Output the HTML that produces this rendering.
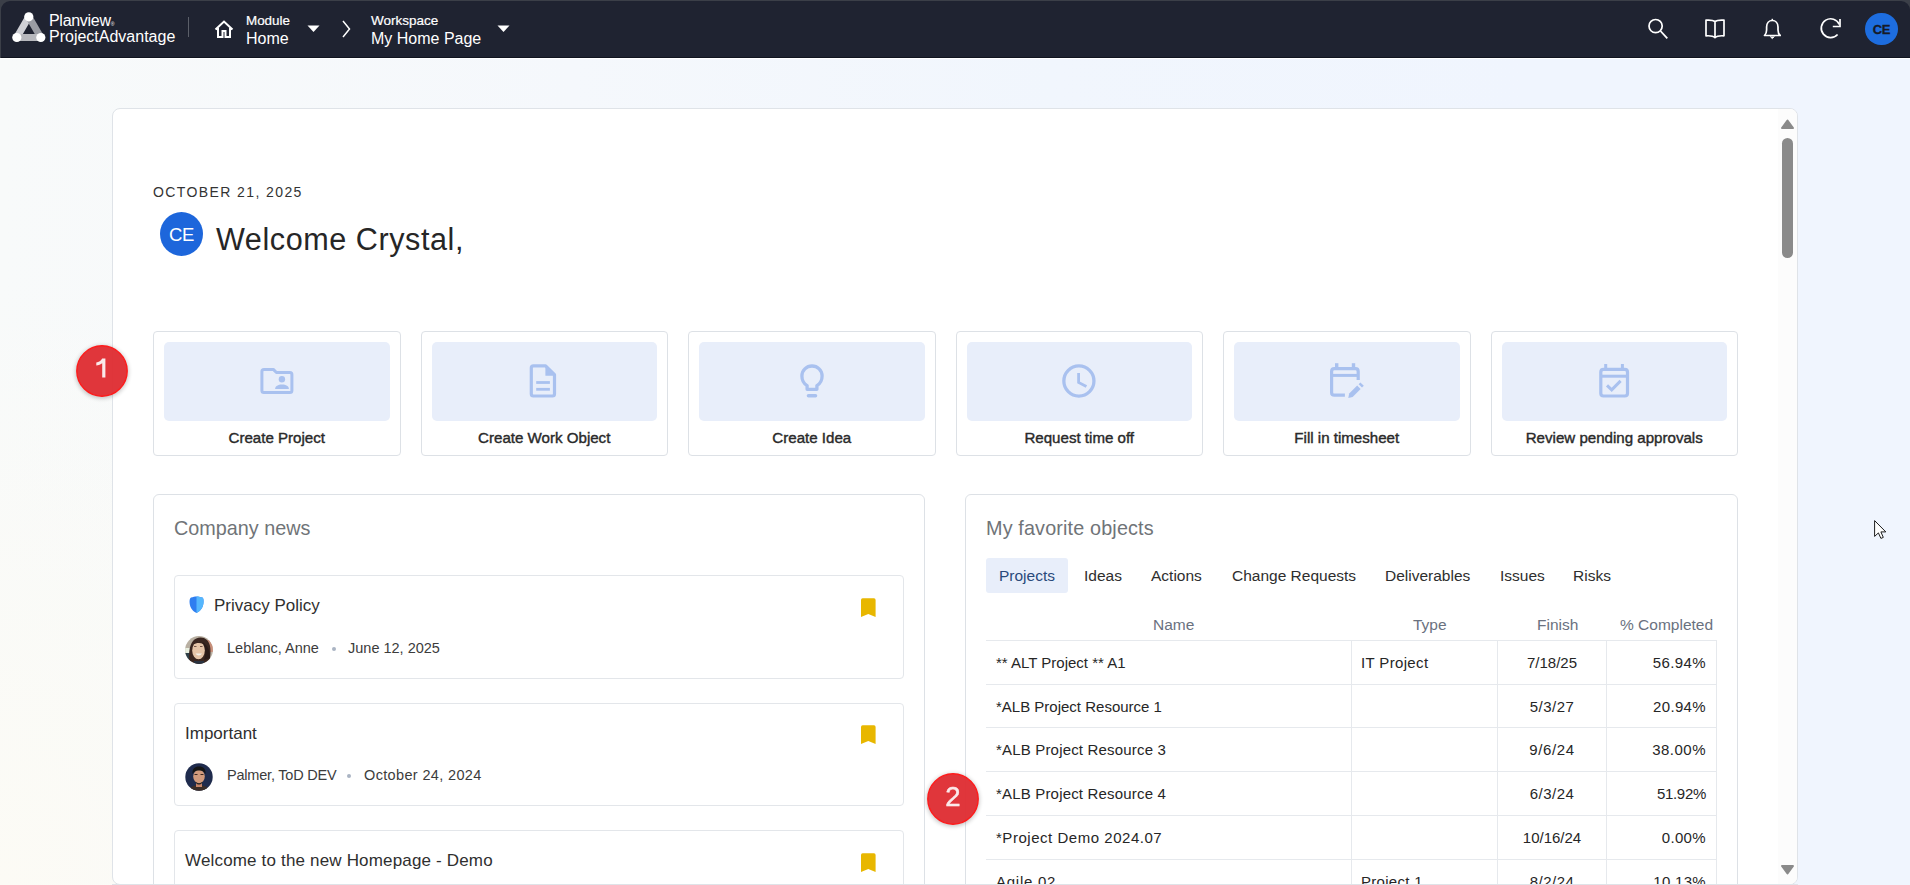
<!DOCTYPE html>
<html><head><meta charset="utf-8">
<style>
*{box-sizing:border-box;margin:0;padding:0}
html,body{width:1910px;height:885px;overflow:hidden}
body{font-family:"Liberation Sans",sans-serif;background:#f5f7fb;position:relative;color:#222}
.a{position:absolute}
.t{position:absolute;white-space:nowrap;line-height:1}
#bg{left:0;top:0;width:1910px;height:885px;background:radial-gradient(ellipse 500px 600px at 0% 100%,rgba(252,251,245,1) 0%,rgba(252,251,245,0) 100%),linear-gradient(90deg,#f8fafa 0%,#f5f8fc 30%,#f1f6fd 55%,#f0f5fe 80%)}
#hdr{left:0;top:0;width:1910px;height:58px;background:#3b3f48}
#hdrin{left:1px;top:1px;width:1909px;height:56px;background:#1f2331;border-radius:9px 9px 0 0}
#card{left:112px;top:108px;width:1686px;height:777px;background:#fff;border:1px solid #dfe3e8;border-radius:8px;overflow:hidden}
.wh{color:#fff}
.act{top:331px;width:247.5px;height:125px;border:1px solid #dde1e6;border-radius:4px;background:#fff}
.tile{position:absolute;left:10px;top:10px;width:225.5px;height:79px;background:#e8eefa;border-radius:5px}
.tile svg{position:absolute;left:92.75px;top:19px}
.albl{position:absolute;left:0;top:97.5px;width:245.5px;text-align:center;font-size:15.1px;color:#2a2a2a;line-height:1;-webkit-text-stroke:0.4px #2a2a2a}
.panel{top:494px;height:420px;border:1px solid #dde1e6;border-radius:6px;background:#fff}
.ptitle{font-size:19.8px;color:#707478}
.news{border:1px solid #e3e6ea;border-radius:4px;background:#fff}
.ntitle{font-size:17px;color:#2f2f2f}
.meta{font-size:14.5px;color:#3c3c3c}
.dot{width:4px;height:4px;border-radius:2px;background:#aab4c3}
.bm{width:16px;height:20px}
.tab{font-size:15.5px;color:#2e2e2e}
.th{font-size:15.5px;color:#6a7180}
.td{font-size:15px;color:#262626}
.hl{height:1px;background:#e6e9ed}
.vl{width:1px;background:#e6e9ed}
.badge{width:51px;height:51px;border-radius:50%;background:#e32b2b;border:1.5px solid #c01818;box-shadow:0 1px 2px rgba(0,0,0,.25)}
.badge span{position:absolute;left:0;top:12px;width:48px;text-align:center;color:#fff;font-size:26px;line-height:1}
</style></head>
<body>
<div id="bg" class="a"></div>

<!-- HEADER -->
<div id="hdr" class="a"></div>
<div id="hdrin" class="a"></div>
<div class="a" style="left:1px;top:57px;width:1909px;height:1px;background:#10141f"></div>
<div class="a" style="left:0;top:58px;width:1910px;height:1px;background:#ffffff"></div>
<svg class="a" style="left:10px;top:10px" width="40" height="36" viewBox="10 10 40 36">
  <line x1="28.8" y1="16.8" x2="16.8" y2="37.5" stroke="#cfd0d5" stroke-width="7" stroke-linecap="round"/>
  <line x1="28.8" y1="16.8" x2="40.8" y2="37.5" stroke="#9b9da4" stroke-width="7" stroke-linecap="round"/>
  <line x1="16.8" y1="37.5" x2="40.8" y2="37.5" stroke="#b7b8bd" stroke-width="7" stroke-linecap="round"/>
  <circle cx="28.8" cy="16.8" r="4.6" fill="#fff"/>
  <circle cx="16.8" cy="37.5" r="4.6" fill="#fff"/>
  <circle cx="40.8" cy="37.5" r="4.6" fill="#fff"/>
</svg>
<div class="t wh" style="left:49px;top:12.5px;font-size:16px;letter-spacing:-0.3px">Planview<span style="font-size:5px;vertical-align:baseline">&reg;</span></div>
<div class="t wh" style="left:49px;top:28.5px;font-size:16px;letter-spacing:0px">ProjectAdvantage</div>
<div class="a" style="left:188px;top:17px;width:1px;height:20px;background:#5b5f69"></div>
<svg class="a" style="left:213px;top:19px" width="22" height="20" viewBox="0 0 22 20">
  <path d="M2.5 10.5 L11 2.5 L19.5 10.5 M5 9 V18 H9.5 V12 H12.5 V18 H17 V9" fill="none" stroke="#fff" stroke-width="2"/>
</svg>
<div class="t wh" style="left:246px;top:14.2px;font-size:13.4px;-webkit-text-stroke:0.2px #fff">Module</div>
<div class="t wh" style="left:246px;top:30.7px;font-size:16px">Home</div>
<svg class="a" style="left:307px;top:25px" width="13" height="8"><path d="M0.5 0.5 H12.5 L6.5 7 Z" fill="#fff"/></svg>
<svg class="a" style="left:340px;top:19px" width="12" height="20"><path d="M3 2 L9.5 10 L3 18" fill="none" stroke="#fff" stroke-width="1.5"/></svg>
<div class="t wh" style="left:371px;top:14.2px;font-size:13.5px;-webkit-text-stroke:0.2px #fff">Workspace</div>
<div class="t wh" style="left:371px;top:30.7px;font-size:16px">My Home Page</div>
<svg class="a" style="left:497px;top:25px" width="13" height="8"><path d="M0.5 0.5 H12.5 L6.5 7 Z" fill="#fff"/></svg>

<svg class="a" style="left:1645px;top:16px" width="26" height="26" viewBox="1645 16 26 26">
  <circle cx="1655.6" cy="26.1" r="6.6" fill="none" stroke="#fff" stroke-width="1.7"/>
  <line x1="1660.5" y1="31" x2="1667.3" y2="38.3" stroke="#fff" stroke-width="1.8"/>
</svg>
<svg class="a" style="left:1703px;top:17px" width="24" height="24" viewBox="1703 17 24 24">
  <path d="M1715 36.5 V21.5 C1713 20 1709 20 1706 20.2 V35.8 C1709 35.6 1713 35.6 1715 37.6 C1717 35.6 1721 35.6 1724 35.8 V20.2 C1721 20 1717 20 1715 21.5" fill="none" stroke="#fff" stroke-width="1.7" stroke-linejoin="round"/>
</svg>
<svg class="a" style="left:1761px;top:17px" width="22" height="24" viewBox="1761 17 22 24">
  <path d="M1764.5 35.5 H1780.2 C1778.5 34 1778 32.5 1778 30 V27 C1778 23 1775.5 20.5 1772.3 20.5 C1769 20.5 1766.6 23 1766.6 27 V30 C1766.6 32.5 1766 34 1764.5 35.5 Z" fill="none" stroke="#fff" stroke-width="1.7" stroke-linejoin="round"/>
  <path d="M1770.2 36.5 L1772.3 38.6 L1774.4 36.5" fill="#fff" stroke="#fff" stroke-width="1"/>
  <line x1="1772.3" y1="18.8" x2="1772.3" y2="20.6" stroke="#fff" stroke-width="1.5"/>
</svg>
<svg class="a" style="left:1817px;top:16px" width="26" height="26" viewBox="1817 16 26 26">
  <path d="M1839.3 24.5 A9.4 9.4 0 1 0 1837.6 34.5" fill="none" stroke="#fff" stroke-width="1.7"/>
  <path d="M1840 19 V26.5 H1832.8" fill="none" stroke="#fff" stroke-width="1.7"/>
</svg>
<div class="a" style="left:1865px;top:12.7px;width:32.6px;height:32.6px;border-radius:50%;background:#1d6ddf"></div>
<div class="t" style="left:1865px;top:23px;width:33px;text-align:center;font-size:13px;font-weight:bold;color:#161a26;letter-spacing:-0.3px;-webkit-text-stroke:0.3px #161a26">CE</div>

<!-- MAIN CARD -->
<div id="card" class="a"></div>
<div class="a" style="left:1778px;top:109px;width:19px;height:775px;background:#fcfcfc;border-radius:0 7px 7px 0"></div>
<svg class="a" style="left:1780px;top:118px" width="15" height="12"><path d="M2 10 L7.5 2.5 L13 10 Z" fill="#8a8a8a" stroke="#8a8a8a" stroke-width="2" stroke-linejoin="round"/></svg>
<div class="a" style="left:1782px;top:138px;width:11px;height:120px;border-radius:6px;background:#8a8a8a"></div>
<svg class="a" style="left:1780px;top:864px" width="15" height="12"><path d="M2 2 L7.5 9.5 L13 2 Z" fill="#8a8a8a" stroke="#8a8a8a" stroke-width="2" stroke-linejoin="round"/></svg>

<div class="t" style="left:153px;top:185px;font-size:14px;letter-spacing:1.4px;color:#333">OCTOBER 21, 2025</div>
<div class="a" style="left:160px;top:212px;width:43px;height:44px;border-radius:50%;background:#1d66db"></div>
<div class="t" style="left:160px;top:226px;width:43px;text-align:center;font-size:18.5px;color:#fff;letter-spacing:-0.4px">CE</div>
<div class="t" style="left:216px;top:224.3px;font-size:30.6px;letter-spacing:0.55px;color:#262626">Welcome Crystal,</div>

<!-- ACTION CARDS -->
<div class="a act" style="left:153px"><div class="tile">
<svg width="40" height="40" viewBox="0 0 40 40"><path d="M7 8.4 H16.3 L19.4 11.5 H32.9 Q34.9 11.5 34.9 13.5 V29.4 Q34.9 31.4 32.9 31.4 H6.9 Q4.9 31.4 4.9 29.4 V10.4 Q4.9 8.4 7 8.4 Z" fill="none" stroke="#a9c1ef" stroke-width="3" stroke-linejoin="round"/><circle cx="24.9" cy="18.2" r="3.2" fill="#a9c1ef"/><path d="M18.1 27.9 C18.1 25 21 23.4 25 23.4 C29 23.4 31.9 25 31.9 27.9 Z" fill="#a9c1ef"/></svg>
</div><div class="albl">Create Project</div></div>

<div class="a act" style="left:420.5px"><div class="tile">
<svg width="40" height="40" viewBox="0 0 40 40"><path d="M9.4 4.8 H21.6 L30.5 13.7 V33 Q30.5 35 28.5 35 H9.4 Q7.3 35 7.3 33 V6.8 Q7.3 4.8 9.4 4.8 Z" fill="none" stroke="#a9c1ef" stroke-width="3.2" stroke-linejoin="round"/><path d="M21.4 4 L31.4 14 V14.7 H21.4 Z" fill="#a9c1ef"/><line x1="12.2" y1="21.5" x2="25.9" y2="21.5" stroke="#a9c1ef" stroke-width="2.8"/><line x1="12.2" y1="28.3" x2="25.9" y2="28.3" stroke="#a9c1ef" stroke-width="2.8"/></svg>
</div><div class="albl">Create Work Object</div></div>

<div class="a act" style="left:688px"><div class="tile">
<svg width="40" height="40" viewBox="0 0 40 40"><path d="M15.1 28.3 V24.6 C11.6 22.6 9.9 19.2 9.9 15.1 A10.1 10.1 0 0 1 30.1 15.1 C30.1 19.2 28.4 22.6 24.9 24.6 V28.3 Z" fill="none" stroke="#a9c1ef" stroke-width="3.3" stroke-linejoin="round"/><line x1="16.5" y1="34.8" x2="23.5" y2="34.8" stroke="#a9c1ef" stroke-width="3.6" stroke-linecap="round"/></svg>
</div><div class="albl">Create Idea</div></div>

<div class="a act" style="left:955.5px"><div class="tile">
<svg width="40" height="40" viewBox="0 0 40 40"><circle cx="19.9" cy="20" r="15.05" fill="none" stroke="#a9c1ef" stroke-width="3.3"/><path d="M19.6 11.9 V21.4 L27.4 25.6" fill="none" stroke="#a9c1ef" stroke-width="2.8" stroke-linejoin="miter"/></svg>
</div><div class="albl">Request time off</div></div>

<div class="a act" style="left:1223px"><div class="tile">
<svg width="40" height="40" viewBox="0 0 40 40"><path d="M17.9 34.2 H7.4 Q4.6 34.2 4.6 31.4 V10.4 Q4.6 7.6 7.4 7.6 H28.4 Q31.2 7.6 31.2 10.4 V18.9" fill="none" stroke="#a9c1ef" stroke-width="3.2"/><line x1="4.6" y1="14.4" x2="31.2" y2="14.4" stroke="#a9c1ef" stroke-width="3"/><line x1="9.7" y1="2.2" x2="9.7" y2="8" stroke="#a9c1ef" stroke-width="3.4"/><line x1="26.5" y1="2.2" x2="26.5" y2="8" stroke="#a9c1ef" stroke-width="3.4"/><path d="M21.3 37 L22.2 32.6 L30.2 24.6 L33.6 28 L25.6 36 Z" fill="#a9c1ef"/><path d="M31.6 23.2 L33.4 21.4 L36.8 24.8 L35 26.6 Z" fill="#a9c1ef"/></svg>
</div><div class="albl">Fill in timesheet</div></div>

<div class="a act" style="left:1490.5px"><div class="tile">
<svg width="40" height="40" viewBox="0 0 40 40"><path d="M9.6 8.3 H30.7 Q33.5 8.3 33.5 11.1 V32.2 Q33.5 35 30.7 35 H9.6 Q6.8 35 6.8 32.2 V11.1 Q6.8 8.3 9.6 8.3 Z" fill="none" stroke="#a9c1ef" stroke-width="3.2"/><line x1="6.8" y1="15.2" x2="33.5" y2="15.2" stroke="#a9c1ef" stroke-width="3"/><line x1="11.7" y1="3" x2="11.7" y2="9" stroke="#a9c1ef" stroke-width="3"/><line x1="28.4" y1="3" x2="28.4" y2="9" stroke="#a9c1ef" stroke-width="3"/><path d="M13 24.3 L17.7 28.8 L26.6 19.9" fill="none" stroke="#a9c1ef" stroke-width="3"/></svg>
</div><div class="albl">Review pending approvals</div></div>

<svg class="a" style="left:69.5px;top:338.5px;opacity:0.97" width="64" height="64" viewBox="0 0 64 64"><defs><filter id="sh1" x="-30%" y="-30%" width="160%" height="160%"><feGaussianBlur stdDeviation="2.6"/></filter></defs><circle cx="32" cy="33" r="26" fill="rgba(0,0,0,0.28)" filter="url(#sh1)"/><circle cx="32" cy="32" r="25.2" fill="#e03035" stroke="#ff1414" stroke-width="1.4"/><path d="M32.2 19.5 H35.4 V38.6 H32.2 V24.2 C30.8 25.4 28.6 26.2 26.3 26.5 V23.6 C28.8 23.1 31 21.7 32.2 19.5 Z" fill="#fbe9ea"/></svg>

<!-- COMPANY NEWS -->
<div class="a panel" style="left:153px;width:772px"></div>
<div class="t ptitle" style="left:174px;top:519px">Company news</div>

<div class="a news" style="left:174px;top:575px;width:730px;height:104px"></div>
<svg class="a" style="left:189px;top:596px" width="16" height="18" viewBox="0 0 16 18"><path d="M2 1.5 C4 1 6 0.5 7.5 0.5 C9 0.5 11 1 13.5 1.5 C14.5 2.5 14.8 4 14.5 7 C14 12 11 15.5 7.5 17 C4 15.5 1 12 0.6 7 C0.4 4 0.8 2.5 2 1.5 Z" fill="#2f7ef0"/><path d="M7.5 0.5 C9 0.5 11 1 13.5 1.5 C14.5 2.5 14.8 4 14.5 7 C14 12 11 15.5 7.5 17 Z" fill="#55b7fd"/></svg>
<div class="t ntitle" style="left:214px;top:596.5px">Privacy Policy</div>
<svg class="a bm" style="left:860px;top:598px" viewBox="0 0 16 20"><path d="M1 2 Q1 0.3 2.6 0.3 H14 Q15.6 0.3 15.6 2 V19 L8.3 16 L1 19 Z" fill="#e8b700"/></svg>
<svg class="a" style="left:185px;top:635.5px" width="28" height="28" viewBox="0 0 28 28"><defs><clipPath id="av1"><circle cx="14" cy="14" r="13.9"/></clipPath></defs><g clip-path="url(#av1)">
<rect width="28" height="28" fill="#b9b0a2"/><rect x="0" y="12" width="6" height="6" fill="#e9efe0"/><rect x="0" y="17" width="6" height="11" fill="#2f3f48"/><rect x="22" y="4" width="6" height="12" fill="#c98f7a"/>
<path d="M5 28 C3 20 4 10 8 5 C11 1 18 0 22 4 C26 8 26 16 25 22 L24 28 Z" fill="#3a2620"/>
<ellipse cx="13.5" cy="14.5" rx="6.3" ry="8.8" fill="#e5c4a8"/>
<path d="M7.5 9 C10 4 17 4 20 9 C18 7 12 6 7.5 9 Z" fill="#3a2620"/>
<path d="M17 6 C21 10 21 18 19 24 L25 22 C25 15 23 9 17 6 Z" fill="#2a1a18"/>
<path d="M10.5 17.5 C12 20 15.5 20 17 17.5 Z" fill="#f4f0ea"/>
<path d="M9 10.5 h2.5 M15 10.5 h2.5" stroke="#5a3a30" stroke-width="0.8"/>
<rect x="9" y="25" width="10" height="3" fill="#2a3340"/>
</g></svg>
<div class="t meta" style="left:227px;top:641px">Leblanc, Anne</div>
<div class="a dot" style="left:332px;top:647px"></div>
<div class="t meta" style="left:348px;top:641px">June 12, 2025</div>

<div class="a news" style="left:174px;top:703px;width:730px;height:103px"></div>
<div class="t ntitle" style="left:185px;top:724.5px">Important</div>
<svg class="a bm" style="left:860px;top:725px" viewBox="0 0 16 20"><path d="M1 2 Q1 0.3 2.6 0.3 H14 Q15.6 0.3 15.6 2 V19 L8.3 16 L1 19 Z" fill="#e8b700"/></svg>
<svg class="a" style="left:185px;top:762.5px" width="28" height="28" viewBox="0 0 28 28"><defs><clipPath id="av2"><circle cx="14" cy="14" r="13.7"/></clipPath></defs><g clip-path="url(#av2)">
<rect width="28" height="28" fill="#1f2b4d"/>
<path d="M3 28 C5 24 9 22 14 22 C19 22 23 24 26 28 Z" fill="#3a2d28"/>
<rect x="11" y="17" width="6" height="7" fill="#c58468"/>
<ellipse cx="14" cy="13.5" rx="5.8" ry="6.8" fill="#d29a7c"/>
<path d="M7.5 11 C7 5 11 3 14.5 3.5 C18 3.5 21 5.5 20.5 11 C19 8 16 7 14 7.5 C11 7 9 8.5 7.5 11 Z" fill="#151515"/>
<path d="M10.5 18 C12 21 16 21 17.5 18 L17 20 C15.5 22 12.5 22 11 20 Z" fill="#222"/>
<path d="M9.5 11.5 h3 M15.5 11.5 h3" stroke="#2a1a15" stroke-width="0.9"/>
</g></svg>
<div class="t meta" style="left:227px;top:768px;letter-spacing:-0.2px">Palmer, ToD DEV</div>
<div class="a dot" style="left:347px;top:774px"></div>
<div class="t meta" style="left:364px;top:768px;letter-spacing:0.35px">October 24, 2024</div>

<div class="a news" style="left:174px;top:830px;width:730px;height:103px"></div>
<div class="t ntitle" style="left:185px;top:851.5px;letter-spacing:0.17px">Welcome to the new Homepage - Demo</div>
<svg class="a bm" style="left:860px;top:853px" viewBox="0 0 16 20"><path d="M1 2 Q1 0.3 2.6 0.3 H14 Q15.6 0.3 15.6 2 V19 L8.3 16 L1 19 Z" fill="#e8b700"/></svg>

<!-- FAVORITES -->
<div class="a panel" style="left:965px;width:773px"></div>
<div class="t ptitle" style="left:986px;top:519px;letter-spacing:0.15px">My favorite objects</div>
<div class="a" style="left:986px;top:558px;width:82px;height:35px;border-radius:3px;background:#e8eefa"></div>
<div class="t tab" style="left:999px;top:568px;color:#2a4a7a">Projects</div>
<div class="t tab" style="left:1084px;top:568px">Ideas</div>
<div class="t tab" style="left:1151px;top:568px">Actions</div>
<div class="t tab" style="left:1232px;top:568px">Change Requests</div>
<div class="t tab" style="left:1385px;top:568px">Deliverables</div>
<div class="t tab" style="left:1500px;top:568px">Issues</div>
<div class="t tab" style="left:1573px;top:568px">Risks</div>

<div class="t th" style="left:1153px;top:617px">Name</div>
<div class="t th" style="left:1413px;top:617px">Type</div>
<div class="t th" style="left:1537px;top:617px">Finish</div>
<div class="t th" style="left:1620px;top:617px">% Completed</div>

<div class="a hl" style="left:986px;top:640px;width:731px"></div>
<div class="a hl" style="left:986px;top:684px;width:731px"></div>
<div class="a hl" style="left:986px;top:727px;width:731px"></div>
<div class="a hl" style="left:986px;top:771px;width:731px"></div>
<div class="a hl" style="left:986px;top:815px;width:731px"></div>
<div class="a hl" style="left:986px;top:859px;width:731px"></div>
<div class="a vl" style="left:1351px;top:640px;height:245px"></div>
<div class="a vl" style="left:1497px;top:640px;height:245px"></div>
<div class="a vl" style="left:1606px;top:640px;height:245px"></div>
<div class="a vl" style="left:1716px;top:640px;height:245px"></div>

<div class="t td" style="left:996px;top:655px">** ALT Project ** A1</div>
<div class="t td" style="letter-spacing:0.35px;left:1361px;top:655px">IT Project</div>
<div class="t td" style="left:1497px;top:655px;width:110px;text-align:center">7/18/25</div>
<div class="t td" style="letter-spacing:0.4px;left:1606px;top:655px;width:100px;text-align:right">56.94%</div>
<div class="t td" style="left:996px;top:699px">*ALB Project Resource 1</div>
<div class="t td" style="letter-spacing:0.5px;left:1497px;top:699px;width:110px;text-align:center">5/3/27</div>
<div class="t td" style="letter-spacing:0.35px;left:1606px;top:699px;width:100px;text-align:right">20.94%</div>
<div class="t td" style="letter-spacing:0.18px;left:996px;top:742px">*ALB Project Resource 3</div>
<div class="t td" style="letter-spacing:0.6px;left:1497px;top:742px;width:110px;text-align:center">9/6/24</div>
<div class="t td" style="letter-spacing:0.5px;left:1606px;top:742px;width:100px;text-align:right">38.00%</div>
<div class="t td" style="letter-spacing:0.18px;left:996px;top:786px">*ALB Project Resource 4</div>
<div class="t td" style="letter-spacing:0.5px;left:1497px;top:786px;width:110px;text-align:center">6/3/24</div>
<div class="t td" style="letter-spacing:-0.3px;left:1606px;top:786px;width:100px;text-align:right">51.92%</div>
<div class="t td" style="letter-spacing:0.53px;left:996px;top:830px">*Project Demo 2024.07</div>
<div class="t td" style="left:1497px;top:830px;width:110px;text-align:center">10/16/24</div>
<div class="t td" style="letter-spacing:0.35px;left:1606px;top:830px;width:100px;text-align:right">0.00%</div>
<div class="t td" style="letter-spacing:0.75px;left:996px;top:874px">Agile 02</div>
<div class="t td" style="letter-spacing:0.3px;left:1361px;top:874px">Project 1</div>
<div class="t td" style="letter-spacing:0.5px;left:1497px;top:874px;width:110px;text-align:center">8/2/24</div>
<div class="t td" style="letter-spacing:0.3px;left:1606px;top:874px;width:100px;text-align:right">10.13%</div>

<svg class="a" style="left:920.7px;top:766.8px;opacity:0.97" width="64" height="64" viewBox="0 0 64 64"><defs><filter id="sh2" x="-30%" y="-30%" width="160%" height="160%"><feGaussianBlur stdDeviation="2.6"/></filter></defs><circle cx="32" cy="33" r="26" fill="rgba(0,0,0,0.28)" filter="url(#sh2)"/><circle cx="32" cy="32" r="25.2" fill="#e03035" stroke="#ff1414" stroke-width="1.4"/><text x="32" y="38.6" text-anchor="middle" font-family="Liberation Sans" font-size="27.5" fill="#fbe9ea" stroke="#fbe9ea" stroke-width="0.5">2</text></svg>

<!-- bottom edge of card -->
<div class="a" style="left:112px;top:884px;width:1686px;height:1px;background:#dfe3e8"></div>

<!-- cursor -->
<svg class="a" style="left:1870px;top:516px" width="20" height="26" viewBox="1870 516 20 26"><path d="M1874.6 520.6 V536.4 L1878.4 532.9 L1880.9 538.4 L1883.3 537.4 L1880.9 531.9 H1885.8 Z" fill="#fff" stroke="#111" stroke-width="0.95" stroke-linejoin="round"/></svg>
</body></html>
